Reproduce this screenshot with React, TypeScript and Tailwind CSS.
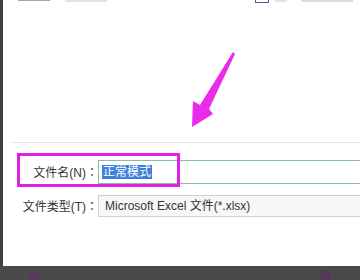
import React from 'react';

const font = { fontFamily: '"Liberation Sans", "Noto Sans CJK SC", sans-serif' };
// TC centres the full-width colon, like the original dialog font
const colon = { fontFamily: '"Noto Sans CJK TC", sans-serif' };

function Arrow() {
  return (
    <svg
      className="absolute left-[183px] top-[48px]"
      width="54"
      height="84"
      viewBox="183 48 54 84"
    >
      <polygon
        points="230,52 232,54 206,109 210,114 189,127 190,101 197,105"
        fill="#ea2cea"
      />
    </svg>
  );
}

export default function App() {
  return (
    <div className="w-[360px] h-[280px] bg-[#4a4a4a] flex flex-col overflow-hidden" style={font}>
      <div className="flex flex-1">
        <div className="w-[3px] bg-[#3f3f3f]" />
        <div className="flex-1 bg-white relative flex flex-col">
          {/* cut-off toolbar remains at the very top */}
          <div className="h-[3px] flex items-start">
            <div className="ml-[15px] w-[32px] h-[1px] bg-[#a8a8a8]" />
            <div className="ml-[15px] w-[42px] h-[2px] bg-[#e2e2e2]" />
            <div className="ml-[148px] w-[14px] h-[3px] border-x border-b border-[#44609a]" />
            <div className="ml-[6px] w-[12px] h-[2px] bg-[#e4e4e4]" />
            <div className="ml-[14px] w-[52px] h-[2px] bg-[#dedede]" />
          </div>

          <div className="ml-[7px] mt-[139px] h-px bg-[#e6e6e6]" />

          <div className="mt-[17px] flex items-center h-[24px]">
            <div className="w-[95px] text-right text-[12px] text-[#333]">
              文件名(N)<span style={colon}>：</span>
            </div>
            <div className="flex-1 h-[24px] border border-r-0 border-[#86bea6] flex items-center pl-[3px]">
              <span className="bg-[#3d7fdc] text-white text-[12px] leading-[14px] px-px">正常模式</span>
            </div>
          </div>

          <div className="mt-[11px] flex items-center h-[22px]">
            <div className="w-[95px] text-right text-[12px] text-[#333]">
              文件类型(T)<span style={colon}>：</span>
            </div>
            <div className="flex-1 h-[22px] border border-r-0 border-[#cfcfcf] bg-[#f7f7f7] flex items-center pl-[6px] text-[12px] text-[#333]">
              Microsoft Excel 文件(*.xlsx)
            </div>
          </div>

          <div className="absolute left-[14px] top-[153px] w-[163px] h-[34px] border-[3px] border-[#e21fe2]" />
          <Arrow />
        </div>
      </div>
      <div className="h-[14px] bg-[#4a4a4a] flex items-end">
        <div className="ml-[29px] w-[11px] h-[10px] rounded-t-full bg-[#5a3b5c]" />
        <div className="ml-[279px] w-[12px] h-[10px] rounded-t-full bg-[#553a58]" />
      </div>
    </div>
  );
}
